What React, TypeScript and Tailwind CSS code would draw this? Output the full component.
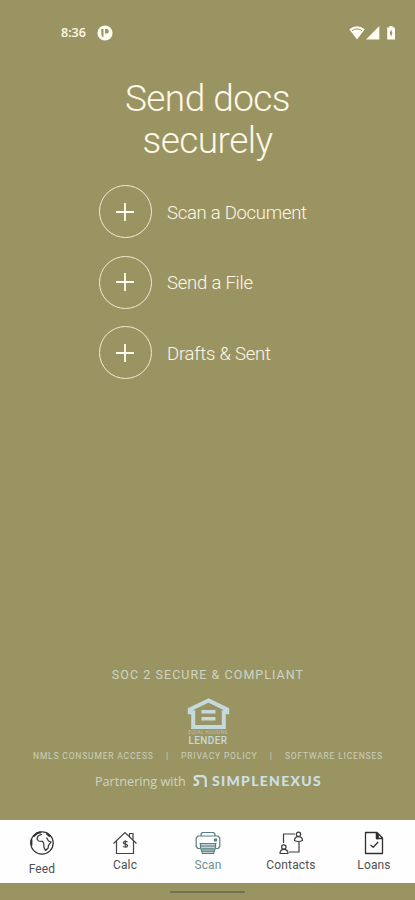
import React from "react";

function Action({ label, spacing }: { label: string; spacing: string }) {
  return (
    <button className="flex h-[53px] items-center gap-[15.5px] text-left">
      <span className="flex h-[53px] w-[53px] shrink-0 items-center justify-center rounded-full border-[1.4px] border-[#f3ead2]">
        <svg width="18" height="18" viewBox="0 0 18 18" fill="none" stroke="#fffdf2" strokeWidth="1.8">
          <path d="M9 0v18M0 9h18" />
        </svg>
      </span>
      <span className={"whitespace-nowrap pt-[2px] text-[18.5px] font-light leading-6 text-[#fff8e6] " + spacing}>{label}</span>
    </button>
  );
}

function StatusBar() {
  return (
    <header className="flex h-[66px] items-center justify-between pl-[61px] pr-[18px] text-white">
      <div className="flex items-center gap-[11px]">
        <span className="font-['Open_Sans','Noto_Sans',sans-serif] text-[12.5px] font-semibold leading-4 text-[#fffbea]">8:36</span>
        <svg width="16" height="16" viewBox="0 0 16 16">
          <circle cx="8" cy="8" r="7.6" fill="#fffef5" />
          <path d="M4.300 4h2.200v8.300C5 11.700 4.300 10.500 4.300 9ZM8 4h1.600a2.300 2.300 0 0 1 0 4.600H8Z" fill="#9a9463" />
        </svg>
      </div>
      <svg width="48" height="16" viewBox="0 0 48 16" fill="#fffef5">
        <path d="M.3 4.3Q8 -1.8 15.700 4.300L8 14.500Z" />
        <path d="M3 5.700Q8 2.200 13 5.700" fill="none" stroke="#9a9463" strokeWidth="1" />
        <path d="M30.300 1v13.500H17Z" />
        <path d="M38.200 2.500H40.300V1h3.400v1.500H46v12h-7.800Z" />
        <path d="M42.100 4.500 40.800 8l1.300 3.800L43.400 8Z" fill="#9a9463" />
      </svg>
    </header>
  );
}

function HousingLogo() {
  return (
    <div className="mt-[15px] flex h-[47px] w-[44px] flex-col items-center text-[#c5dadd]">
      <svg width="43" height="32" viewBox="0 0 43 32" className="shrink-0">
        <path d="M21.500 2.500 2.800 11.500v2.700h3.400v14.800h30.600V14.200h3.400v-2.700Z" fill="none" stroke="#c5dadd" strokeWidth="4" />
        <path d="M14.500 12h14v3.500h-14ZM14.500 19h14v3.500h-14Z" fill="#c5dadd" />
      </svg>
      <span className="whitespace-nowrap text-[4.500px] leading-[5px] tracking-[0.400px] text-[#bcc7b3]">EQUAL HOUSING</span>
      <span className="whitespace-nowrap text-[10px] font-medium leading-[11px] tracking-[0.400px]">LENDER</span>
    </div>
  );
}

function GlobeIcon() {
  return (
    <svg width="26" height="26" viewBox="0 0 26 26" fill="none" stroke="#303030" strokeWidth="1.200" strokeLinejoin="round">
      <circle cx="13" cy="13" r="11.200" />
      <path d="M13 4.200 9 6 8 9l1.500 2 4 .3 1.200 2.200.3 4 1.500 3 2.500-2.200.5-3 2.500-3.300-2.500-1-2-3.500" />
      <path d="M4.500 6.500 8 3.200l4-1M17.500 3.200 21 6.500" strokeWidth="2" />
      <path d="M2.500 9.500v6" strokeWidth="1.800" />
    </svg>
  );
}

function HomeIcon() {
  return (
    <svg width="26" height="26" viewBox="0 0 26 26" fill="none" stroke="#444444" strokeWidth="1.200">
      <path d="M1.500 13.500 13 2.500l11.500 11M4.500 11v12.500h17V11M17.500 6.500v-3h3.500v6.300" />
      <path d="M15.500 12c-.7-1-4.200-1-4.200.8 0 2 4.300.8 4.300 2.900 0 1.900-3.800 1.600-4.500.5M13.300 10.300v7.500" strokeWidth="1.200" />
    </svg>
  );
}

function PrinterIcon() {
  return (
    <svg width="26" height="26" viewBox="0 0 26 26" fill="none" stroke="#56807f" strokeWidth="1.200" strokeLinejoin="round">
      <path d="M5.500 13.500h15v4l-2 6h-11l-2-6Z" fill="#c3d2d2" stroke="none" />
      <path d="M6 6V4l1.500-1.500h11L20 4v2M5.500 18.500H3l-1.800-2V8L3 6h20l1.800 2v8.500l-1.800 2h-2.500" />
      <path d="M4.500 13.500h17M5.500 13.500v4l2 6h11l2-6v-4M5.500 16h15M7 18.800h12M7.500 21.200h11" />
      <path d="M19.500 9h2v2h-2Z" fill="#467879" />
    </svg>
  );
}

function ContactsIcon() {
  return (
    <svg width="26" height="26" viewBox="0 0 26 26" fill="none" stroke="#3c3c3c" strokeWidth="1.200" strokeLinejoin="round">
      <path d="M5.500 13V4H17M21 12v10H11" />
      <circle cx="20.500" cy="4.300" r="2.200" />
      <path d="M16.500 10.500c0-5.300 8-5.300 8 0q-4 2-8 0Z" />
      <circle cx="5.800" cy="17" r="2.200" />
      <path d="M2 23.500c0-5.500 8-5.500 8 0Z" />
    </svg>
  );
}

function LoansIcon() {
  return (
    <svg width="26" height="26" viewBox="0 0 26 26" fill="none" stroke="#303030" strokeWidth="1.300" strokeLinejoin="round">
      <path d="M4.500 2.500h11.500l5.500 5.500v15.500h-17ZM15.500 2.500v6h6" />
      <path d="M15.500 3v5.500h1.700V4.500Z" fill="#252525" />
      <path d="m9.500 15 2.700 2.300 5-5.300" />
    </svg>
  );
}

function Tab({ icon, label, active, low }: { icon: React.ReactNode; label: string; active?: boolean; low?: boolean }) {
  return (
    <div className="flex flex-1 flex-col items-center pl-[1px] pt-[10px]">
      {icon}
      <span
        className={
          "whitespace-nowrap text-[12px] leading-[14px] tracking-[0.150px] " +
          (low ? "mt-[6px] " : "mt-[2px] ") +
          (active ? "text-[#6a9290]" : "text-[#505050]")
        }
      >
        {label}
      </span>
    </div>
  );
}

export default function App() {
  return (
    <div className="flex h-[900px] w-[415px] flex-col overflow-hidden bg-[#9a9463] font-[Roboto,sans-serif]">
      <StatusBar />
      <main className="flex flex-1 flex-col">
        <h1 className="mt-[12px] text-center text-[37px] font-light leading-[42px] tracking-[-0.550px] text-[#fff8e9]">
          Send docs
          <br />
          securely
        </h1>
        <div className="mt-[23px] flex flex-col gap-[17.500px] pl-[98.500px]">
          <Action label="Scan a Document" spacing="tracking-[-0.270px]" />
          <Action label="Send a File" spacing="tracking-[-0.220px]" />
          <Action label="Drafts & Sent" spacing="tracking-[-0.200px]" />
        </div>
      </main>
      <footer className="flex h-[153px] flex-col items-center pl-[1px] text-[#cdd4c2]">
        <p className="whitespace-nowrap text-[12.500px] leading-4 tracking-[1.050px]">SOC 2 SECURE &amp; COMPLIANT</p>
        <HousingLogo />
        <div className="mt-[6px] flex w-[350px] items-center justify-between whitespace-nowrap text-[8.500px] leading-[11px] tracking-[0.820px] text-[#cbd0bb]">
          <span>NMLS CONSUMER ACCESS</span>
          <span>|</span>
          <span>PRIVACY POLICY</span>
          <span>|</span>
          <span>SOFTWARE LICENSES</span>
        </div>
        <div className="mt-[10px] flex h-[18px] items-center whitespace-nowrap pl-[1px]">
          <span className="font-['Open_Sans','Noto_Sans',sans-serif] text-[12.700px] leading-[18px]">Partnering with</span>
          <svg width="15" height="14" viewBox="0 0 15 14" fill="none" stroke="#cce0e3" strokeWidth="2.200" className="ml-[7px]">
            <path d="M7 2.200H4.200C.8 2.200 1 5.200 3.300 6c3 1 2.200 4.900-.3 4.900H.5M6 2.200h2.800c2.500 0 4 1.800 4 4.300V13" />
          </svg>
          <span className="ml-[4px] font-[Lato,sans-serif] text-[14px] font-black leading-[18px] tracking-[1.300px] text-[#cce0e3]">SIMPLENEXUS</span>
        </div>
      </footer>
      <nav className="flex h-[63px] bg-[#fefefe]">
        <Tab icon={<GlobeIcon />} label="Feed" low />
        <Tab icon={<HomeIcon />} label="Calc" />
        <Tab icon={<PrinterIcon />} label="Scan" active />
        <Tab icon={<ContactsIcon />} label="Contacts" />
        <Tab icon={<LoansIcon />} label="Loans" />
      </nav>
      <div className="flex h-[17px] items-center justify-center">
        <div className="mt-[1px] h-[2px] w-[75px] rounded-full bg-[#74704f]" />
      </div>
    </div>
  );
}
